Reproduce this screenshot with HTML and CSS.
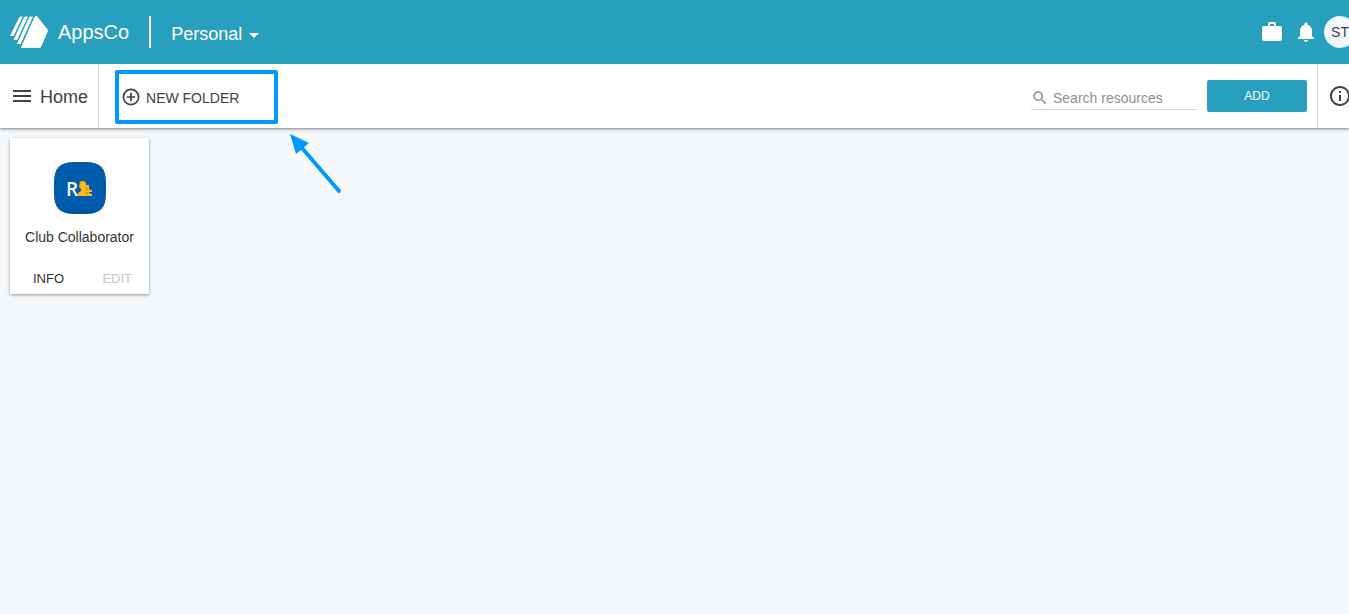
FILE: index.html
```
<!DOCTYPE html>
<html lang="en">
<head>
<meta charset="utf-8">
<title>AppsCo - Home</title>
<link rel="stylesheet" href="styles.css">
</head>
<body>
<header class="header">
  <a class="brand" href="#">
    <svg class="logo" viewBox="0 0 38 32" aria-hidden="true">
      <path fill="#fff" d="M27.200 .6L37.600 13.400Q38.200 14.200 37.800 15.200L31.300 30.600Q30.700 32 29.500 32H10.800L24.600 .8Q25.800 -.8 27.200 .6Z"/>
      <path fill="#fff" d="M9.300 1.200Q10.200 0 12.800 .6L3.600 20H0ZM14.100 1.200Q15 0 17.900 .6L7.200 24H3.500ZM19.100 1.200Q20 0 23 .6L10.700 28H7Z"/>
    </svg>
    <span class="brand-name">AppsCo</span>
  </a>
  <button class="account" type="button">Personal
    <svg class="caret" viewBox="0 0 10 5" aria-hidden="true"><path fill="currentColor" d="M0 0H10L5 5Z"/></svg>
  </button>
  <div class="header-actions">
    <button class="icon-button" type="button" aria-label="Resources">
      <svg class="icon" viewBox="0 0 24 24"><path fill="currentColor" d="M10 2h4a2 2 0 0 1 2 2v2h4a2 2 0 0 1 2 2v11a2 2 0 0 1-2 2H4a2 2 0 0 1-2-2V8a2 2 0 0 1 2-2h4V4a2 2 0 0 1 2-2zm0 2v2h4V4z"/></svg>
    </button>
    <button class="icon-button" type="button" aria-label="Notifications">
      <svg class="icon" viewBox="0 0 24 24"><path fill="currentColor" d="M12 22c1.100 0 2-.9 2-2h-4c0 1.100.89 2 2 2zm6-6v-5c0-3.070-1.640-5.640-4.500-6.320V4c0-.83-.67-1.500-1.500-1.500s-1.500.67-1.500 1.500v.68C7.630 5.360 6 7.920 6 11v5l-2 2v1h16v-1l-2-2z"/></svg>
    </button>
    <button class="avatar" type="button">ST</button>
  </div>
</header>

<nav class="toolbar">
  <button class="menu" type="button">
    <svg class="icon" viewBox="0 0 24 24" aria-hidden="true"><path fill="currentColor" d="M3 18h18v-2H3v2zm0-5h18v-2H3v2zm0-7v2h18V6H3z"/></svg>
    <span class="menu-label">Home</span>
  </button>
  <div class="folder-area">
    <button class="new-folder" type="button">
      <svg class="icon-small" viewBox="0 0 20 20" aria-hidden="true"><g fill="none" stroke="currentColor" stroke-width="1.700"><circle cx="10" cy="10" r="7.600"/><path d="M10 5.800V14.200M5.800 10H14.200"/></g></svg>
      <span>NEW FOLDER</span>
    </button>
    <svg class="pointer" viewBox="0 0 52 60" aria-hidden="true"><path fill="#0099ff" d="M0 0L19 9L6 20Z"/><path d="M12 14L49 57" stroke="#0099ff" stroke-width="4" stroke-linecap="round"/></svg>
  </div>
  <label class="search">
    <svg class="search-icon" viewBox="0 0 24 24" aria-hidden="true"><path fill="currentColor" d="M15.500 14h-.79l-.28-.27A6.470 6.470 0 0 0 16 9.500 6.500 6.500 0 1 0 9.500 16c1.610 0 3.090-.59 4.230-1.570l.27.28v.79l5 4.990L20.490 19l-4.990-5zm-6 0C7.010 14 5 11.990 5 9.500S7.010 5 9.500 5 14 7.010 14 9.500 11.990 14 9.500 14z"/></svg>
    <input class="search-input" type="text" placeholder="Search resources" aria-label="Search resources">
  </label>
  <button class="add" type="button">ADD</button>
  <div class="info-area">
    <button class="icon-button" type="button" aria-label="Information">
      <svg class="icon" viewBox="0 0 24 24"><path fill="currentColor" d="M11 17h2v-6h-2v6zm1-15C6.480 2 2 6.480 2 12s4.480 10 10 10 10-4.480 10-10S17.520 2 12 2zm0 18c-4.410 0-8-3.590-8-8s3.590-8 8-8 8 3.590 8 8-3.590 8-8 8zM11 9h2V7h-2v2z"/></svg>
    </button>
  </div>
</nav>

<main class="resources">
  <article class="card">
    <svg class="app-icon" viewBox="0 0 52 52" aria-hidden="true">
      <defs><linearGradient id="tile" x1="0" y1="0" x2="0" y2="1"><stop offset="0.880" stop-color="#005dab"/><stop offset="1" stop-color="#004f92"/></linearGradient></defs>
      <path fill="url(#tile)" d="M20 0H32C46 0 52 6 52 20V32C52 46 46 52 32 52H20C6 52 0 46 0 32V20C0 6 6 0 20 0Z"/>
      <text class="app-letter" x="12" y="34">R</text>
      <path fill="#fdb913" d="M26 20L28 19H30L32 21V23H35V27L37 28H38V30H35V31L38 32V34H24V31L27 29V27L25 25Z"/>
      <path d="M32.500 25V28H34M31 31H34" fill="none" stroke="#a98642"/>
    </svg>
    <h2 class="card-title">Club Collaborator</h2>
    <div class="card-actions">
      <button class="card-button" type="button">INFO</button>
      <button class="card-button" type="button" disabled>EDIT</button>
    </div>
  </article>
</main>
</body>
</html>
```
FILE: styles.css
```
* { box-sizing: border-box; }
body {
  margin: 0;
  min-height: 100vh;
  overflow-x: hidden;
  background: #f4f8fb;
  color: #414042;
  font-family: "Liberation Sans", Arial, sans-serif;
  font-size: 14px;
}
button {
  padding: 0;
  border: 0;
  background: none;
  color: inherit;
  font: inherit;
}
svg { display: block; flex: none; }
.icon { width: 24px; height: 24px; }
.icon-small { width: 20px; height: 20px; }
.icon-button { flex: none; }

.header {
  position: relative;
  z-index: 1;
  display: flex;
  align-items: center;
  height: 64px;
  padding-left: 10px;
  overflow: hidden;
  background: #289fbd;
  color: #fff;
}
.brand {
  display: flex;
  align-items: center;
  gap: 10px;
  height: 32px;
  padding-right: 20px;
  border-right: 2px solid #fff;
  color: #fff;
  font-size: 20px;
  text-decoration: none;
}
.logo { width: 38px; height: 32px; }
.account {
  display: flex;
  align-items: center;
  gap: 7px;
  padding: 4px 0 0 20px;
  font-size: 18px;
}
.caret { width: 10px; height: 5px; margin-top: 2px; }
.header-actions {
  display: flex;
  align-items: center;
  gap: 10px;
  margin: 0 -7px 0 auto;
}
.avatar {
  width: 32px;
  height: 32px;
  border-radius: 50%;
  background: #f4f8fb;
  color: #414042;
}
.header-actions .avatar { margin-left: -4px; }

.toolbar {
  position: relative;
  display: flex;
  align-items: center;
  height: 64px;
  background: #fff;
  box-shadow: 0 1px 3px rgba(0, 0, 0, 0.5);
}
.menu {
  display: flex;
  align-items: center;
  gap: 6px;
  height: 64px;
  padding: 0 10px;
  border-right: 1px solid #d8d8d8;
  font-size: 18px;
}
.menu-label { padding-top: 2px; }
.folder-area { position: relative; margin: 2px auto 0 16px; }
.new-folder {
  display: flex;
  align-items: center;
  gap: 5px;
  width: 163px;
  height: 54px;
  padding-left: 2px;
  border: 4px solid #0099ff;
  border-radius: 2px;
}
.new-folder span { padding-top: 2px; }
.pointer {
  position: absolute;
  top: 64px;
  left: 175px;
  width: 52px;
  height: 60px;
}
.search {
  display: flex;
  align-items: center;
  gap: 4px;
  width: 166px;
  height: 24px;
  margin: 4px 10px 0 0;
  border-bottom: 1px solid #d8d8d8;
  color: #8f8f8f;
}
.search-icon { width: 18px; height: 18px; }
.search-input {
  flex: 1;
  min-width: 0;
  padding: 0;
  border: 0;
  outline: 0;
  background: none;
  color: #414042;
  font: inherit;
}
.search-input::placeholder { color: #8f8f8f; opacity: 1; }
.add {
  width: 100px;
  height: 32px;
  border-radius: 2px;
  background: #289fbd;
  color: #fff;
  font-size: 12px;
}
.info-area {
  display: flex;
  align-items: center;
  width: 32px;
  height: 64px;
  margin-left: 10px;
  padding-left: 10px;
  overflow: hidden;
  border-left: 1px solid #d8d8d8;
}

.resources {
  display: flex;
  flex-wrap: wrap;
  gap: 10px;
  padding: 10px;
}
.card {
  display: flex;
  flex-direction: column;
  align-items: center;
  width: 139px;
  padding: 24px 0 8px;
  background: #fff;
  box-shadow: 0 1px 3px rgba(0, 0, 0, 0.4);
}
.app-icon { width: 52px; height: 52px; }
.app-letter {
  fill: #fff;
  font-family: "Open Sans", sans-serif;
  font-size: 19px;
  font-weight: 600;
}
.card-title {
  margin: 15px 0 26px;
  font-size: 14px;
  font-weight: 400;
  line-height: 16px;
  color: #333;
}
.card-actions {
  display: flex;
  justify-content: space-between;
  align-self: stretch;
  padding: 0 17px 0 23px;
}
.card-button { font-size: 13px; color: #333; }
.card-button:disabled { color: #c8c8c8; }
```
